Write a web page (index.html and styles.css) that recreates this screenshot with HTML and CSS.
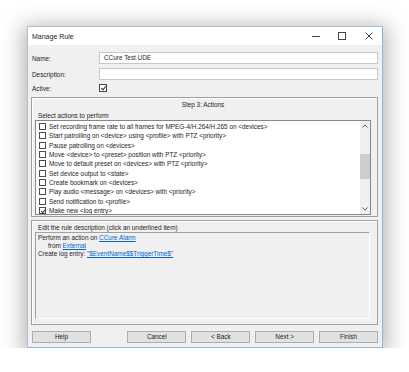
FILE: index.html
```html
<!DOCTYPE html>
<html>
<head>
<meta charset="utf-8">
<link rel="stylesheet" href="styles.css">
</head>
<body>
<div class="window">
  <div class="titlebar">
    <span class="title">Manage Rule</span>
    <div class="controls">
      <span class="ctl"><svg width="8" height="8" viewBox="0 0 8 8"><line x1="0" y1="4.5" x2="8" y2="4.5" stroke="#444" stroke-width="1"/></svg></span>
      <span class="ctl"><svg width="8" height="8" viewBox="0 0 8 8"><rect x="0.5" y="0.5" width="7" height="7" fill="none" stroke="#444" stroke-width="1"/></svg></span>
      <span class="ctl"><svg width="8" height="8" viewBox="0 0 8 8"><path d="M0.5 0.5 L7.5 7.5 M7.5 0.5 L0.5 7.5" stroke="#444" stroke-width="1"/></svg></span>
    </div>
  </div>
  <div class="content">
    <div class="form">
      <label class="lbl">Name:</label>
      <div class="input">CCure Test UDE</div>
      <label class="lbl">Description:</label>
      <div class="input"></div>
      <label class="lbl">Active:</label>
      <div><span class="cb big checked"></span></div>
    </div>

    <div class="group group1">
      <div class="step">Step 3: Actions</div>
      <div class="sub">Select actions to perform</div>
      <div class="list">
        <div class="items">
          <div class="item"><span class="cb"></span><span>Set recording frame rate to all frames for MPEG-4/H.264/H.265 on &lt;devices&gt;</span></div>
          <div class="item"><span class="cb"></span><span>Start patrolling on &lt;device&gt; using &lt;profile&gt; with PTZ &lt;priority&gt;</span></div>
          <div class="item"><span class="cb"></span><span>Pause patrolling on &lt;devices&gt;</span></div>
          <div class="item"><span class="cb"></span><span>Move &lt;device&gt; to &lt;preset&gt; position with PTZ &lt;priority&gt;</span></div>
          <div class="item"><span class="cb"></span><span>Move to default preset on &lt;devices&gt; with PTZ &lt;priority&gt;</span></div>
          <div class="item"><span class="cb"></span><span>Set device output to &lt;state&gt;</span></div>
          <div class="item"><span class="cb"></span><span>Create bookmark on &lt;devices&gt;</span></div>
          <div class="item"><span class="cb"></span><span>Play audio &lt;message&gt; on &lt;devices&gt; with &lt;priority&gt;</span></div>
          <div class="item"><span class="cb"></span><span>Send notification to &lt;profile&gt;</span></div>
          <div class="item"><span class="cb checked"></span><span>Make new &lt;log entry&gt;</span></div>
        </div>
        <div class="scrollbar">
          <div class="arrow"><svg width="6" height="4" viewBox="0 0 6 4"><path d="M0.5 3.5 L3 1 L5.5 3.5" fill="none" stroke="#606060" stroke-width="1"/></svg></div>
          <div class="track"><div class="thumb"></div></div>
          <div class="arrow"><svg width="6" height="4" viewBox="0 0 6 4"><path d="M0.5 0.5 L3 3 L5.5 0.5" fill="none" stroke="#606060" stroke-width="1"/></svg></div>
        </div>
      </div>
    </div>

    <div class="group group2">
      <div class="sub">Edit the rule description (click an underlined item)</div>
      <div class="desc">
        <div>Perform an action on <a>CCure Alarm</a></div>
        <div class="indent">from <a>External</a></div>
        <div>Create log entry: <a>"$EventName$$TriggerTime$"</a></div>
      </div>
    </div>

    <div class="buttons">
      <div class="btn">Help</div>
      <div class="spacer"></div>
      <div class="btn">Cancel</div>
      <div class="btn">&lt; Back</div>
      <div class="btn">Next &gt;</div>
      <div class="btn">Finish</div>
    </div>
  </div>
</div>
</body>
</html>
```
FILE: styles.css
```css
html, body {
  margin: 0;
  padding: 0;
  background: #ffffff;
}
body {
  padding: 26px 0 0 27px;
  font-family: "Liberation Sans", Arial, sans-serif;
  font-size: 6.4px;
  color: #1e1e1e;
}
.window {
  width: 356px;
  height: 322px;
  box-sizing: border-box;
  border: 1px solid #8db6df;
  border-top-color: #a9bfd6;
  border-left-color: #a9bfd6;
  background: #f0f0f0;
  display: flex;
  flex-direction: column;
  box-shadow: 0 4px 20px 4px rgba(0, 0, 0, 0.3);
}
.titlebar {
  height: 18px;
  background: #ffffff;
  display: flex;
  align-items: center;
  padding-left: 4px;
}
.title {
  font-size: 7px;
  flex: 1;
}
.controls {
  display: flex;
  height: 100%;
}
.ctl {
  width: 26.5px;
  display: flex;
  align-items: center;
  justify-content: center;
}
.content {
  flex: 1;
  display: flex;
  flex-direction: column;
  padding: 7px 4px 0 3px;
}
.form {
  display: grid;
  grid-template-columns: 68px 1fr;
  row-gap: 4px;
  align-items: center;
}
.lbl {
  padding-left: 1px;
}
.input {
  height: 12px;
  box-sizing: border-box;
  background: #fff;
  border: 1px solid #c8c8c8;
  padding-left: 4px;
  line-height: 10px;
}
.cb {
  display: inline-block;
  width: 7px;
  height: 7px;
  box-sizing: border-box;
  border: 1px solid #4a4a4a;
  background: #fff;
  position: relative;
  flex: none;
}
.cb.big {
  width: 8px;
  height: 8px;
  vertical-align: middle;
}
.cb.checked::after {
  content: "";
  position: absolute;
  left: 1.5px;
  top: 0px;
  width: 2px;
  height: 3.5px;
  border: solid #333;
  border-width: 0 1px 1px 0;
  transform: rotate(40deg);
}
.cb.big.checked::after {
  left: 2px;
  width: 2px;
  height: 4px;
}
.group {
  border: 1px solid #a0a0a0;
  box-shadow: inset 1px 1px 0 #fff;
  display: flex;
  flex-direction: column;
}
.group1 {
  margin-top: 5px;
  height: 120px;
  box-sizing: border-box;
  padding: 0 6px 1px 3px;
}
.step {
  text-align: center;
  height: 11px;
  line-height: 13px;
}
.sub {
  padding-left: 3px;
  height: 11px;
  line-height: 13px;
}
.list {
  flex: 1;
  background: #fff;
  border: 1px solid #828790;
  display: flex;
  overflow: hidden;
}
.items {
  flex: 1;
  padding-top: 0.5px;
}
.item {
  height: 9.33px;
  display: flex;
  align-items: center;
  padding-left: 3px;
  gap: 3px;
  white-space: nowrap;
}
.scrollbar {
  width: 10px;
  background: #f0f0f0;
  display: flex;
  flex-direction: column;
}
.arrow {
  height: 10px;
  display: flex;
  align-items: center;
  justify-content: center;
}
.track {
  flex: 1;
  padding-top: 23px;
}
.thumb {
  height: 25px;
  background: #cdcdcd;
}
.group2 {
  margin-top: 3px;
  height: 105px;
  box-sizing: border-box;
  padding: 0 7px 5px 3px;
}
.desc {
  flex: 1;
  border-top: 1px solid #a0a0a0;
  border-left: 1px solid #a0a0a0;
  border-right: 1px solid #fff;
  border-bottom: 1px solid #fff;
  padding: 1px 0 0 2px;
  line-height: 8px;
}
.desc a {
  color: #0066cc;
  text-decoration: underline;
}
.indent {
  padding-left: 10px;
}
.buttons {
  display: flex;
  gap: 5px;
  margin-top: 6px;
  padding-left: 1px;
}
.spacer {
  width: 27px;
}
.btn {
  width: 60px;
  height: 12px;
  box-sizing: border-box;
  background: #e1e1e1;
  border: 1px solid #adadad;
  text-align: center;
  line-height: 10px;
}
```
